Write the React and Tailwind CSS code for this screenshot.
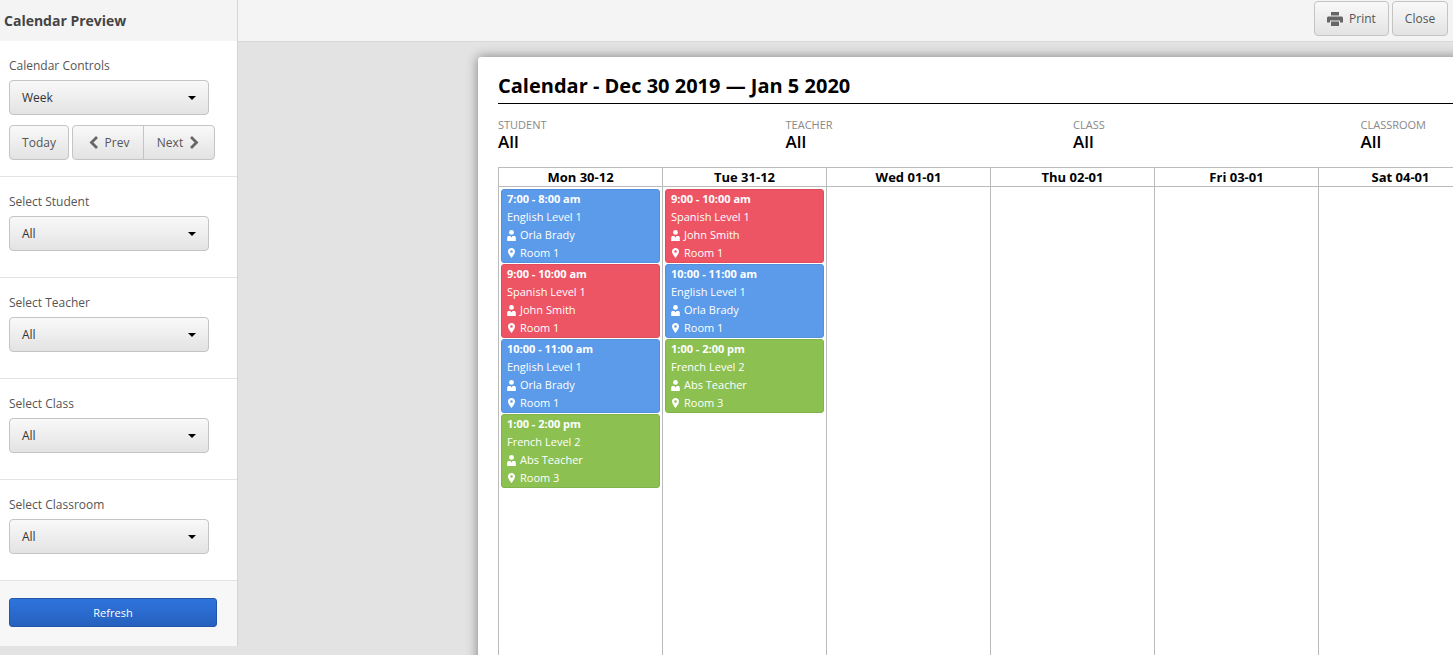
const font = { fontFamily: '"Open Sans", sans-serif' };

const btn = "border border-[#c4c4c4] bg-gradient-to-b from-[#f9f9f9] to-[#e3e3e3] text-[12px] text-[#555]";

const blue = "bg-[#5b9bea] border-[#5590da]";
const red = "bg-[#ed5565] border-[#e04c5c]";
const green = "bg-[#8cc152] border-[#80b34a]";

const mon = [
  { time: "7:00 - 8:00 am", name: "English Level 1", who: "Orla Brady", room: "Room 1", color: blue },
  { time: "9:00 - 10:00 am", name: "Spanish Level 1", who: "John Smith", room: "Room 1", color: red },
  { time: "10:00 - 11:00 am", name: "English Level 1", who: "Orla Brady", room: "Room 1", color: blue },
  { time: "1:00 - 2:00 pm", name: "French Level 2", who: "Abs Teacher", room: "Room 3", color: green },
];
const tue = [
  { time: "9:00 - 10:00 am", name: "Spanish Level 1", who: "John Smith", room: "Room 1", color: red },
  { time: "10:00 - 11:00 am", name: "English Level 1", who: "Orla Brady", room: "Room 1", color: blue },
  { time: "1:00 - 2:00 pm", name: "French Level 2", who: "Abs Teacher", room: "Room 3", color: green },
];
const days = [
  { label: "Mon 30-12", events: mon },
  { label: "Tue 31-12", events: tue },
  { label: "Wed 01-01", events: [] },
  { label: "Thu 02-01", events: [] },
  { label: "Fri 03-01", events: [] },
  { label: "Sat 04-01", events: [] },
];

function Caret() {
  return <span className="w-0 h-0 border-x-[4px] border-x-transparent border-t-[4px] border-t-black" />;
}

function Select({ value }) {
  return (
    <div className={`${btn} w-[200px] h-[35px] rounded-[4px] flex items-center justify-between pl-[12px] pr-[12px] !text-[#333]`}>
      <span>{value}</span>
      <Caret />
    </div>
  );
}

function Section({ label, value }) {
  return (
    <div className="h-[101px] border-b border-[#e3e3e3] pt-[16px] pl-[9px]">
      <div className="text-[12px] leading-[18px] text-[#555] mb-[5px]">{label}</div>
      <Select value={value} />
    </div>
  );
}

function UserIcon() {
  return (
    <svg width="9" height="11" viewBox="0 0 9 11" className="fill-white shrink-0">
      <circle cx="4.5" cy="2.4" r="2.4" />
      <path d="M.2 11V7.6C.2 6.6.9 6 1.8 6H3.4L4.5 7.6 5.6 6H7.2C8.1 6 8.8 6.6 8.8 7.6V11Z" />
    </svg>
  );
}

function PinIcon() {
  return (
    <svg width="7" height="10" viewBox="0 0 7 10" className="fill-white shrink-0">
      <path fillRule="evenodd" d="M3.5 0C1.5 0 0 1.5 0 3.4 0 5.5 2.4 8.4 3.5 10 4.6 8.4 7 5.5 7 3.4 7 1.5 5.5 0 3.5 0ZM3.5 2.2A1.3 1.3 0 1 1 3.5 4.8 1.3 1.3 0 1 1 3.5 2.2Z" />
    </svg>
  );
}

function PrintIcon() {
  return (
    <svg width="16" height="14" viewBox="0 0 16 14" className="fill-[#666]">
      <path d="M4 0H12V3.5H4Z" />
      <path d="M1.5 4.5H14.5C15.3 4.5 16 5.2 16 6V10.5H13V8.5H3V10.5H0V6C0 5.2 .7 4.5 1.5 4.5Z" />
      <path d="M4 9.5H12V14H4Z" />
    </svg>
  );
}

function Chevron({ dir }) {
  return (
    <svg width="10" height="13" viewBox="0 0 10 13" className="fill-none stroke-[#666] stroke-[2.8]">
      <path d={dir === "left" ? "M8 1 2.5 6.5 8 12" : "M2 1 7.5 6.5 2 12"} />
    </svg>
  );
}

function EventCard({ ev }) {
  return (
    <div className={`${ev.color} border rounded-[3px] h-[74px] text-white text-[11px] leading-[18px] pl-[5px] mb-[1px]`}>
      <div className="font-bold">{ev.time}</div>
      <div>{ev.name}</div>
      <div className="flex items-center gap-[4px]"><UserIcon />{ev.who}</div>
      <div className="flex items-center gap-[4px]">
        <span className="w-[9px] flex justify-center"><PinIcon /></span>
        {ev.room}
      </div>
    </div>
  );
}

export default function App() {
  return (
    <div className="w-[1453px] h-[655px] overflow-hidden flex bg-[#e3e3e3]" style={font}>
      {/* left panel */}
      <aside className="w-[238px] h-[646px] shrink-0 bg-white border-r border-[#d4d4d4]">
        <div className="h-[41px] bg-[#f4f4f4] pl-[4px] flex items-center text-[14px] font-bold text-[#444]">
          Calendar Preview
        </div>
        <div className="h-[136px] border-b border-[#e3e3e3] pt-[16px] pl-[9px]">
          <div className="text-[12px] leading-[18px] text-[#555] mb-[5px]">Calendar Controls</div>
          <Select value="Week" />
          <div className="flex gap-[3px] mt-[10px]">
            <div className={`${btn} w-[60px] h-[35px] rounded-[4px] flex items-center justify-center`}>Today</div>
            <div className={`${btn} w-[143px] h-[35px] rounded-[4px] flex`}>
              <div className="w-[71px] flex items-center justify-center gap-[6px] border-r border-[#c4c4c4] pl-[2px]">
                <Chevron dir="left" />Prev
              </div>
              <div className="flex-1 flex items-center justify-center gap-[6px] pr-[2px]">
                Next<Chevron dir="right" />
              </div>
            </div>
          </div>
        </div>
        <Section label="Select Student" value="All" />
        <Section label="Select Teacher" value="All" />
        <Section label="Select Class" value="All" />
        <Section label="Select Classroom" value="All" />
        <div className="h-[65px] bg-[#f7f7f7] pt-[17px] pl-[9px]">
          <div className="w-[208px] h-[29px] rounded-[3px] border border-[#2355a8] bg-gradient-to-b from-[#2e74de] to-[#2661bd] text-white text-[11px] flex items-center justify-center pt-[1px]">
            Refresh
          </div>
        </div>
      </aside>

      <main className="flex-1 min-w-0 flex flex-col overflow-hidden">
        {/* toolbar */}
        <div className="h-[42px] shrink-0 bg-[#f4f4f4] border-b border-[#d8d8d8] flex justify-end items-start pt-[1px] pr-[5px] gap-[3px]">
          <div className={`${btn} w-[75px] h-[35px] rounded-[4px] flex items-center justify-center gap-[6px]`}>
            <PrintIcon />Print
          </div>
          <div className={`${btn} w-[56px] h-[35px] rounded-[4px] flex items-center justify-center`}>Close</div>
        </div>

        {/* paper */}
        <div className="pl-[240px] pt-[15px]">
          <div className="w-[1200px] h-[700px] bg-white rounded-tl-[3px] shadow-[0_0_12px_rgba(0,0,0,0.45)] pt-[15px] px-[20px]">
            <h1 className="text-[20px] leading-[28px] font-bold text-black border-b border-black pb-[3px]">
              Calendar - Dec 30 2019 — Jan 5 2020
            </h1>
            <div className="grid grid-cols-[287.5px_287.5px_287.5px_287.5px] mt-[14px]">
              {["STUDENT", "TEACHER", "CLASS", "CLASSROOM"].map((f) => (
                <div key={f}>
                  <div className="text-[11px] leading-[14px] text-[#888]">{f}</div>
                  <div className="text-[17px] leading-[20px] font-semibold text-black">All</div>
                </div>
              ))}
            </div>
            <div className="flex mt-[15px] w-[985px] border-t border-l border-[#bbb]">
              {days.map((d) => (
                <div key={d.label} className="w-[164px] shrink-0 border-r border-[#bbb] h-[520px]">
                  <div className="h-[19px] border-b border-[#bbb] text-[13px] leading-[19px] font-bold text-black text-center">
                    {d.label}
                  </div>
                  <div className="pt-[2px] px-[2px]">
                    {d.events.map((ev, i) => <EventCard key={i} ev={ev} />)}
                  </div>
                </div>
              ))}
            </div>
          </div>
        </div>
      </main>
    </div>
  );
}
